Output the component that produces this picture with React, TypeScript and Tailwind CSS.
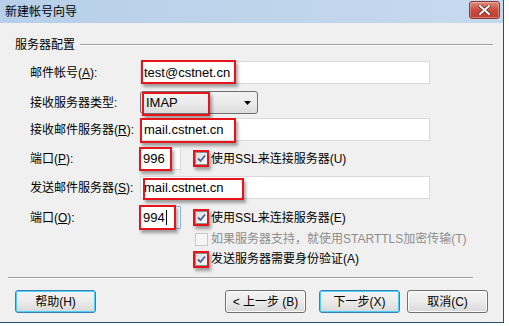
import React from "react";

const FONT = { fontFamily: '"Liberation Sans", "Noto Sans CJK SC", sans-serif' } as const;

function RedBox({ className }: { className: string }) {
  return (
    <span
      className={
        "pointer-events-none absolute border-2 border-[#e8141b] shadow-[2px_3px_3px_rgba(0,0,0,0.35)] " +
        className
      }
    />
  );
}

function Check({ checked, disabled, red }: { checked?: boolean; disabled?: boolean; red?: boolean }) {
  return (
    <span className="relative inline-flex h-[13px] w-[13px] shrink-0">
      <span
        className={
          "flex h-[13px] w-[13px] items-center justify-center border " +
          (disabled
            ? "border-[#c8c8c8] bg-[#f6f6f6]"
            : "border-[#8e8f8f] bg-gradient-to-br from-[#dcdcdc] to-[#fbfbfb]")
        }
      >
        {checked && (
          <svg width="9" height="9" viewBox="0 0 9 9">
            <path d="M1 4.5 L3.5 7 L8 1.5" fill="none" stroke="#4a5f97" strokeWidth="1.8" />
          </svg>
        )}
      </span>
      {red && <RedBox className="left-[-2px] top-[-2px] h-[17px] w-[16px]" />}
    </span>
  );
}

function Label({ text, k, rest }: { text: string; k?: string; rest?: string }) {
  return (
    <div className="w-[110px] shrink-0 text-[12px] leading-none text-black" style={FONT}>
      {text}
      {k && (
        <>
          (<span className="underline">{k}</span>)
        </>
      )}
      {rest ?? ":"}
    </div>
  );
}

function Btn({ children, focus, className }: { children: React.ReactNode; focus?: boolean; className?: string }) {
  return (
    <div
      className={
        "flex h-[23px] w-[81px] items-center justify-center rounded-[3px] border bg-gradient-to-b from-[#f4f4f4] via-[#ebebeb] to-[#d8d8d8] text-[12px] leading-none text-black " +
        (focus
          ? "border-[#3c7fb1] shadow-[inset_0_0_0_1px_#48d2f9]"
          : "border-[#707070] shadow-[inset_0_0_0_1px_#fcfcfc]") +
        " " +
        (className ?? "")
      }
      style={FONT}
    >
      {children}
    </div>
  );
}

export default function App() {
  const valFont = { fontFamily: '"Liberation Sans", sans-serif' } as const;
  return (
    <div className="h-[326px] w-[509px] overflow-hidden bg-white">
      <div className="flex h-[323px] w-[504px] flex-col border-b border-r border-[#2f4f6f] bg-[#f0f0f0]">
        {/* title bar */}
        <div className="flex h-[23px] shrink-0 items-center bg-gradient-to-r from-[#b7cfe9] via-[#bed4eb] to-[#c6daee] pl-[5px] pr-[2px]">
          <span className="text-[12px] leading-none text-black" style={FONT}>
            新建帐号向导
          </span>
          <div className="ml-auto mr-[1px] mt-[-4px] flex h-[18px] w-[31px] items-center justify-center rounded-[3px] border border-[#8a3b36] bg-gradient-to-b from-[#e08a7e] via-[#c94c40] to-[#c53d30] shadow-[inset_0_0_0_1px_rgba(255,255,255,0.3)]">
            <svg width="13" height="10" viewBox="0 0 13 10">
              <path d="M2 1 L11 9 M11 1 L2 9" stroke="#5a2420" strokeWidth="3.4" strokeLinecap="square" />
              <path d="M2 1 L11 9 M11 1 L2 9" stroke="#ffffff" strokeWidth="2" strokeLinecap="square" />
            </svg>
          </div>
        </div>

        {/* group header */}
        <div className="mt-[14px] flex h-[16px] items-center pl-[15px] pr-[10px]">
          <span className="text-[12px] leading-none text-black" style={FONT}>
            服务器配置
          </span>
          <div className="ml-[5px] flex-1 border-t border-b border-t-[#a0a0a0] border-b-white" />
        </div>

        <div className="flex flex-col pl-[30px]">
          {/* row 1 */}
          <div className="mt-[8px] flex h-[23px] items-center">
            <Label text="邮件帐号" k="A" />
            <div className="relative flex h-[23px] w-[290px] items-center border border-[#dadada] bg-white pl-[3px]">
              <span className="text-[13px] leading-none text-black" style={valFont}>
                test@cstnet.cn
              </span>
              <RedBox className="left-[0px] top-[-2px] h-[24px] w-[95px]" />
            </div>
          </div>

          {/* row 2 */}
          <div className="mt-[7px] flex h-[23px] items-center">
            <Label text="接收服务器类型" rest=":" />
            <div className="relative flex h-[23px] w-[118px] items-center rounded-[3px] border border-[#707070] bg-gradient-to-b from-[#f2f2f2] via-[#ebebeb] to-[#dcdcdc] pl-[5px]">
              <span className="text-[13px] leading-none text-black" style={valFont}>
                IMAP
              </span>
              <svg className="ml-auto mr-[6px]" width="7" height="4" viewBox="0 0 7 4">
                <path d="M0 0 L7 0 L3.5 4 Z" fill="#000" />
              </svg>
              <RedBox className="left-[1px] top-[0px] h-[24px] w-[68px]" />
            </div>
          </div>

          {/* row 3 */}
          <div className="mt-[4px] flex h-[23px] items-center">
            <Label text="接收邮件服务器" k="R" />
            <div className="relative flex h-[23px] w-[290px] items-center border border-[#dadada] bg-white pl-[3px]">
              <span className="text-[13px] leading-none text-black" style={valFont}>
                mail.cstnet.cn
              </span>
              <RedBox className="left-[-1px] top-[-1px] h-[25px] w-[96px]" />
            </div>
          </div>

          {/* row 4 */}
          <div className="mt-[6px] flex h-[23px] items-center">
            <Label text="端口" k="P" />
            <div className="relative flex h-[23px] w-[41px] items-center border border-[#dadada] bg-white pl-[2px]">
              <span className="text-[13px] leading-none text-black" style={valFont}>
                996
              </span>
              <RedBox className="left-[-2px] top-[-1px] h-[24px] w-[33px]" />
            </div>
            <div className="ml-[14px] flex items-center">
              <Check checked red />
              <span className="ml-[3px] text-[12px] leading-none text-black" style={FONT}>
                使用SSL来连接服务器(U)
              </span>
            </div>
          </div>

          {/* row 5 */}
          <div className="mt-[6px] flex h-[23px] items-center">
            <Label text="发送邮件服务器" k="S" />
            <div className="relative flex h-[23px] w-[290px] items-center border border-[#dadada] bg-white pl-[3px]">
              <span className="text-[13px] leading-none text-black" style={valFont}>
                mail.cstnet.cn
              </span>
              <RedBox className="left-[2px] top-[1px] h-[22px] w-[101px]" />
            </div>
          </div>

          {/* row 6 */}
          <div className="mt-[7px] flex h-[23px] items-center">
            <Label text="端口" k="O" />
            <div className="relative flex h-[23px] w-[41px] items-center border border-[#8fb8dc] bg-white pl-[2px]">
              <span className="text-[13px] leading-none text-black" style={valFont}>
                994
              </span>
              <span className="ml-[1px] h-[15px] w-[1px] bg-black" />
              <RedBox className="left-[-2px] top-[-2px] h-[25px] w-[37px]" />
            </div>
            <div className="ml-[14px] flex items-center">
              <Check checked red />
              <span className="ml-[3px] text-[12px] leading-none text-black" style={FONT}>
                使用SSL来连接服务器(E)
              </span>
            </div>
          </div>

          {/* row 7 */}
          <div className="mt-[1px] flex h-[18px] items-center pl-[165px]">
            <Check disabled />
            <span className="ml-[3px] text-[12px] leading-none text-[#8d8d8d]" style={FONT}>
              如果服务器支持，就使用STARTTLS加密传输(T)
            </span>
          </div>

          {/* row 8 */}
          <div className="mt-[2px] flex h-[18px] items-center pl-[165px]">
            <Check checked red />
            <span className="ml-[3px] text-[12px] leading-none text-black" style={FONT}>
              发送服务器需要身份验证(A)
            </span>
          </div>
        </div>

        {/* separator */}
        <div className="ml-[8px] mt-[9px] w-[465px] border-t border-b border-t-[#a0a0a0] border-b-white" />

        {/* buttons */}
        <div className="mt-[11px] flex h-[23px] items-center pl-[15px]">
          <Btn focus>帮助(H)</Btn>
          <Btn className="ml-[129px]">&lt; 上一步 (B)</Btn>
          <Btn focus className="ml-[13px]">下一步(X)</Btn>
          <Btn className="ml-[7px]">取消(C)</Btn>
        </div>
      </div>
    </div>
  );
}
